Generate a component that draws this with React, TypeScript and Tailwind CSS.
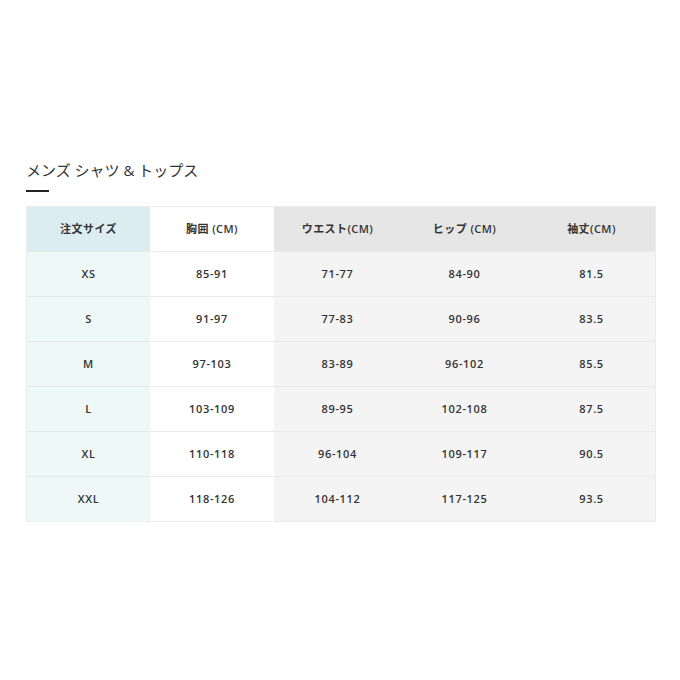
const headers = ["注文サイズ", "胸囲 (CM)", "ウエスト(CM)", "ヒップ (CM)", "袖丈(CM)"];

const rows = [
  ["XS", "85-91", "71-77", "84-90", "81.5"],
  ["S", "91-97", "77-83", "90-96", "83.5"],
  ["M", "97-103", "83-89", "96-102", "85.5"],
  ["L", "103-109", "89-95", "102-108", "87.5"],
  ["XL", "110-118", "96-104", "109-117", "90.5"],
  ["XXL", "118-126", "104-112", "117-125", "93.5"],
];

function cellBg(col: number, header: boolean) {
  if (col === 0) return header ? "bg-[#dcedf1]" : "bg-[#eef8f7]";
  if (col === 1) return "bg-white";
  return header ? "bg-[#e6e6e6]" : "bg-[#f4f4f4]";
}

export default function App() {
  return (
    <div
      className="h-[680px] w-[680px] bg-white pt-[158px] pl-[26px] text-[#333]"
      style={{ fontFamily: '"Open Sans", "Noto Sans CJK JP", sans-serif' }}
    >
      <h1 className="text-[15px] leading-6 text-[#333]">メンズ シャツ &amp; トップス</h1>
      <div className="mt-[8px] h-[2px] w-[23px] bg-[#222]" />

      <div className="mt-[14px] w-[630px] border border-[#ececec]">
        <div className="grid grid-cols-[123px_124px_1fr_1fr_1fr]">
          {headers.map((h, i) => (
            <div
              key={h}
              className={`flex h-[44px] items-center justify-center text-[11px] font-semibold tracking-[0.04em] ${cellBg(i, true)}`}
            >
              {h}
            </div>
          ))}
        </div>
        {rows.map((row) => (
          <div key={row[0]} className="grid grid-cols-[123px_124px_1fr_1fr_1fr] border-t border-[#e9e9e9]">
            {row.map((v, i) => (
              <div
                key={i}
                className={`flex h-[44px] items-center justify-center text-[11px] font-semibold tracking-[0.06em] ${cellBg(i, false)}`}
              >
                {v}
              </div>
            ))}
          </div>
        ))}
      </div>
    </div>
  );
}
